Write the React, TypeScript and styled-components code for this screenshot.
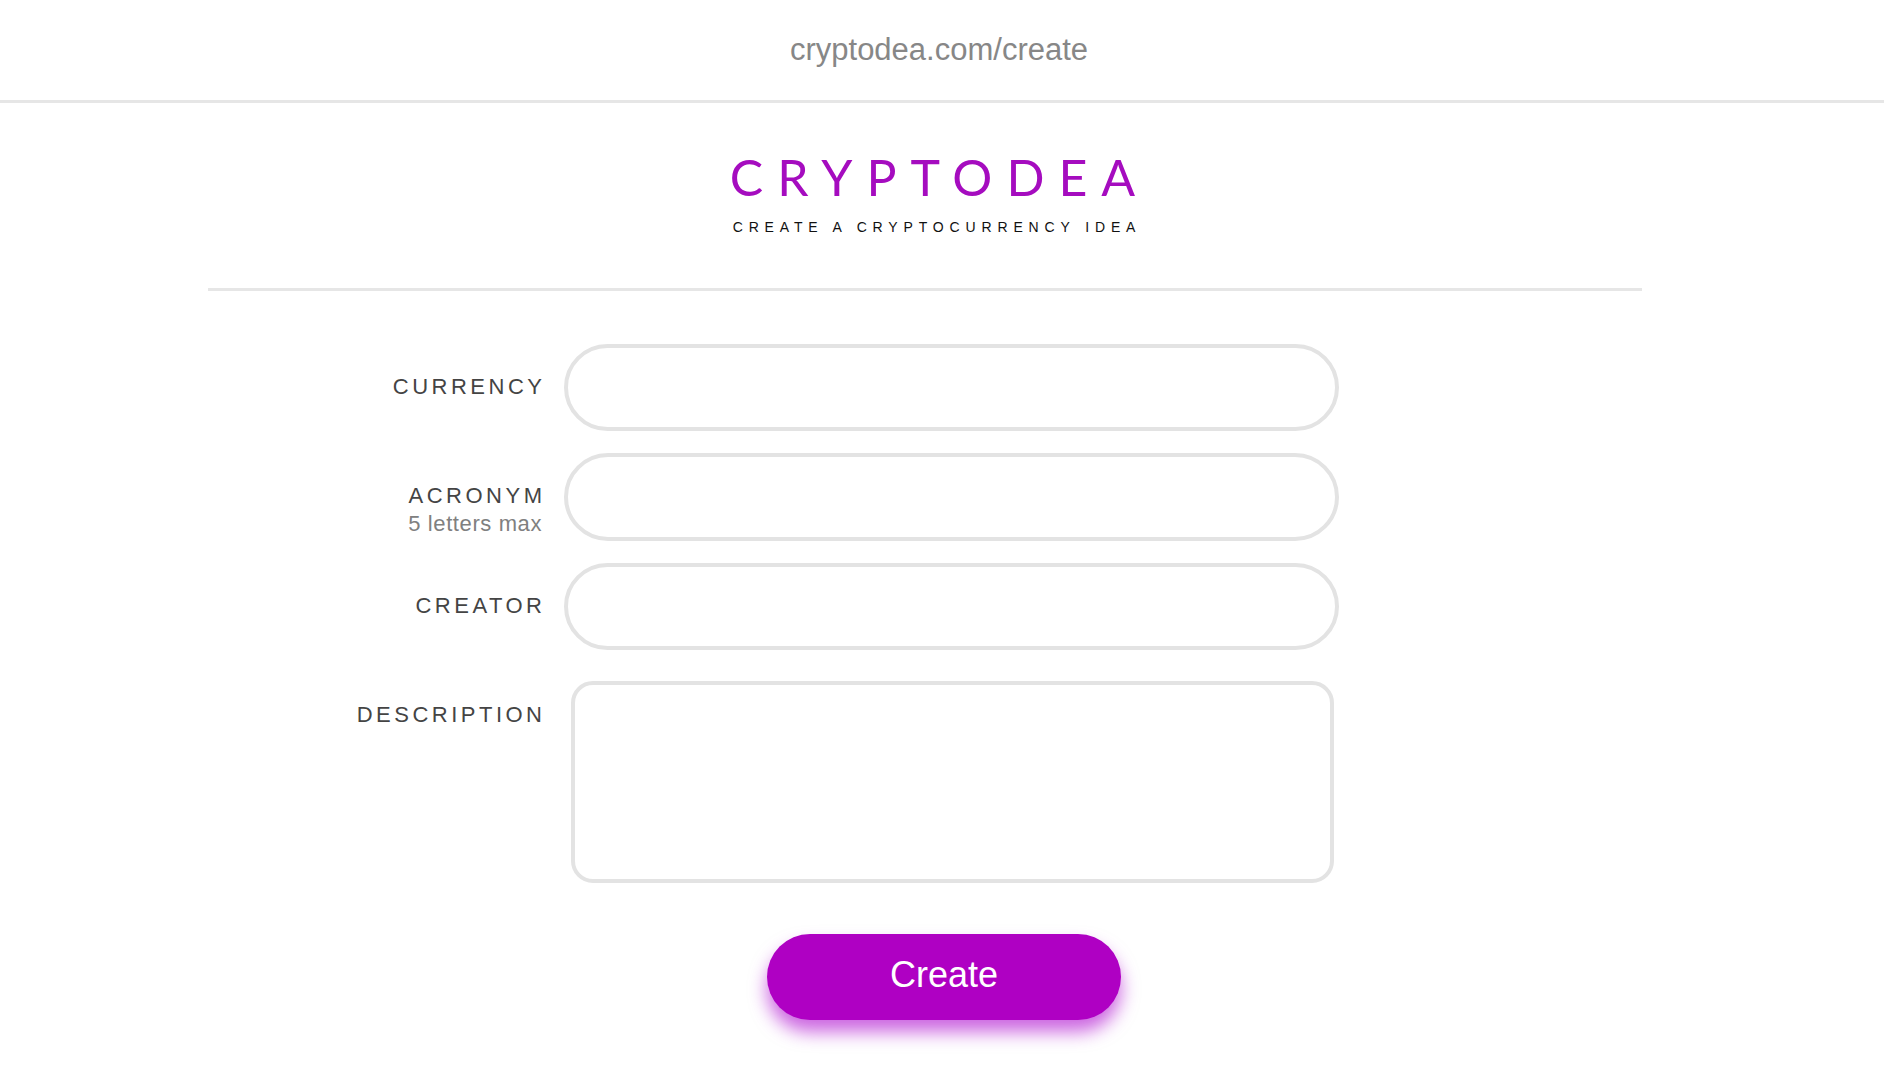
import React from "react";
import styled, { createGlobalStyle } from "styled-components";

const Global = createGlobalStyle`
  html, body { margin: 0; padding: 0; background: #ffffff; }
  body { font-family: "Liberation Sans", Arial, sans-serif; }
  * { box-sizing: border-box; }
`;

const Page = styled.div`
  display: flex;
  flex-direction: column;
  min-height: 1090px;
`;

const AddressBar = styled.header`
  height: 103px;
  border-bottom: 3px solid #e6e6e6;
  display: flex;
  justify-content: center;
  align-items: center;
  padding-right: 6px;
  font-family: "Liberation Sans", Arial, sans-serif;
  font-size: 31px;
  line-height: 100px;
  color: #878787;
`;

const Brand = styled.div`
  display: flex;
  flex-direction: column;
  align-items: center;
  margin-top: 43.6px;
`;

const Title = styled.h1`
  margin: 0;
  font-family: Lato, "Open Sans", sans-serif;
  font-weight: 400;
  font-size: 50px;
  line-height: 60px;
  letter-spacing: 14px;
  padding-right: 5px;
  color: #a50cbf;
`;

const Tagline = styled.p`
  margin: 12.7px 0 0;
  font-family: "Liberation Sans", Arial, sans-serif;
  font-size: 14px;
  line-height: 16px;
  letter-spacing: 5.85px;
  padding-right: 10px;
  color: #111111;
`;

const Section = styled.div`
  margin: 52.7px 242px 0 208px;
  border-top: 3px solid #e6e6e6;
  padding-top: 53px;
`;

const Form = styled.form`
  display: grid;
  grid-template-columns: 337px 775px;
  column-gap: 19px;
  row-gap: 22px;
`;

const LabelBox = styled.label<{ $top: number }>`
  display: flex;
  flex-direction: column;
  align-items: flex-end;
  padding-top: ${(p) => p.$top}px;
`;

const LabelText = styled.span`
  font-family: "Liberation Sans", Arial, sans-serif;
  font-size: 22px;
  line-height: 26px;
  letter-spacing: 3.5px;
  color: #444444;
  text-transform: uppercase;
  margin-right: -0.5px;
`;

const Hint = styled.span`
  margin-top: 2px;
  font-family: "Liberation Sans", Arial, sans-serif;
  font-size: 22px;
  line-height: 26px;
  letter-spacing: 0.6px;
  color: #808080;
  margin-right: 3px;
`;

const Field = styled.input`
  width: 100%;
  height: 87.5px;
  border: 4px solid #e3e3e3;
  border-radius: 44px;
  background: #ffffff;
  outline: none;
  padding: 0 34px;
  font-family: "Liberation Sans", Arial, sans-serif;
  font-size: 22px;
  color: #333;
`;

const Area = styled.textarea`
  display: block;
  width: calc(100% - 12px);
  height: 202px;
  margin: 8.5px 5px 0 7px;
  border: 4px solid #e3e3e3;
  border-radius: 22px;
  background: #ffffff;
  outline: none;
  resize: none;
  padding: 16px 20px;
  font-family: "Liberation Sans", Arial, sans-serif;
  font-size: 22px;
  color: #333;
`;

const Actions = styled.div`
  display: flex;
  justify-content: center;
  padding-left: 4px;
  margin-top: 51px;
`;

const CreateButton = styled.button`
  width: 354px;
  height: 86px;
  border: none;
  border-radius: 43px;
  background: #af00c3;
  color: #ffffff;
  font-family: "Liberation Sans", Arial, sans-serif;
  font-size: 36px;
  padding: 0 0 4px;
  cursor: pointer;
  box-shadow: 0 12px 18px rgba(170, 0, 205, 0.6);
`;

const rows = [
  { label: "Currency", top: 30.5 },
  { label: "Acronym", hint: "5 letters max", top: 30 },
  { label: "Creator", top: 30 },
];

export default function App() {
  return (
    <Page>
      <Global />
      <AddressBar>cryptodea.com/create</AddressBar>
      <Brand>
        <Title>CRYPTODEA</Title>
        <Tagline>CREATE A CRYPTOCURRENCY IDEA</Tagline>
      </Brand>
      <Section>
        <Form onSubmit={(e) => e.preventDefault()}>
          {rows.map((r) => (
            <React.Fragment key={r.label}>
              <LabelBox $top={r.top}>
                <LabelText>{r.label}</LabelText>
                {r.hint && <Hint>{r.hint}</Hint>}
              </LabelBox>
              <Field type="text" />
            </React.Fragment>
          ))}
          <LabelBox $top={30}>
            <LabelText>Description</LabelText>
          </LabelBox>
          <Area />
        </Form>
      </Section>
      <Actions>
        <CreateButton type="button">Create</CreateButton>
      </Actions>
    </Page>
  );
}
